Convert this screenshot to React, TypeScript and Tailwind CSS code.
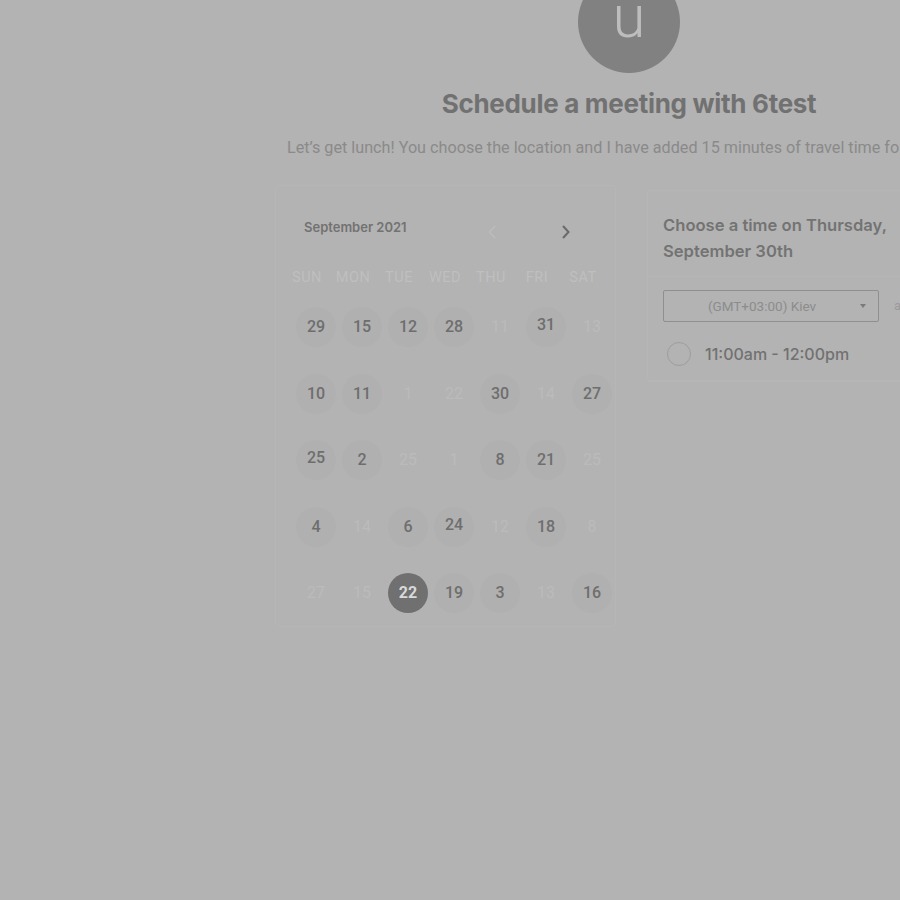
import React from "react";

type Day = { n: number; k: "a" | "f" | "s"; dy?: number };

const rows: Day[][] = [
  [{ n: 29, k: "a" }, { n: 15, k: "a" }, { n: 12, k: "a" }, { n: 28, k: "a" }, { n: 11, k: "f" }, { n: 31, k: "a", dy: -2 }, { n: 13, k: "f" }],
  [{ n: 10, k: "a" }, { n: 11, k: "a" }, { n: 1, k: "f" }, { n: 22, k: "f" }, { n: 30, k: "a" }, { n: 14, k: "f" }, { n: 27, k: "a" }],
  [{ n: 25, k: "a", dy: -2 }, { n: 2, k: "a" }, { n: 25, k: "f" }, { n: 1, k: "f" }, { n: 8, k: "a" }, { n: 21, k: "a" }, { n: 25, k: "f" }],
  [{ n: 4, k: "a" }, { n: 14, k: "f" }, { n: 6, k: "a" }, { n: 24, k: "a", dy: -2 }, { n: 12, k: "f" }, { n: 18, k: "a" }, { n: 8, k: "f" }],
  [{ n: 27, k: "f" }, { n: 15, k: "f" }, { n: 22, k: "s" }, { n: 19, k: "a" }, { n: 3, k: "a" }, { n: 13, k: "f" }, { n: 16, k: "a" }],
];

const week = ["SUN", "MON", "TUE", "WED", "THU", "FRI", "SAT"];

function DayCell({ d }: { d: Day }) {
  const base =
    "w-[40px] h-[40px] rounded-full flex items-center justify-center text-[16px] leading-none";
  if (d.k === "s")
    return (
      <div className={base + " bg-[#707070] text-[#d9d9d9] font-bold"}>{d.n}</div>
    );
  if (d.k === "f")
    return <div className={base + " text-[#bbbbbb] font-normal"}>{d.n}</div>;
  return (
    <div className={base + " bg-[#b0b0b0] text-[#6e6e6e] font-medium"}>
      <span className={d.dy ? "-translate-y-[2px]" : ""}>{d.n}</span>
    </div>
  );
}

export default function App() {
  return (
    <div
      className="w-[900px] h-[900px] overflow-hidden bg-[#b3b3b3]"
      style={{ fontFamily: "Roboto, 'Liberation Sans', sans-serif" }}
    >
      <div className="w-[700px] ml-[279px] flex flex-col items-center">
        <div className="-mt-[29px] w-[102px] h-[102px] rounded-full bg-[#818181] flex items-center justify-center">
          <span className="text-[60px] leading-none text-[#bdbdbd] font-light -mt-[11px]">u</span>
        </div>
        <h1
          className="mt-[15px] text-[26px] leading-[32px] font-bold text-[#717171] tracking-[-0.3px]"
          style={{ fontFamily: "Inter, 'Liberation Sans', sans-serif" }}
        >
          Schedule a meeting with 6test
        </h1>
        <p className="self-start ml-[8px] mt-[17px] text-[16.2px] leading-[22px] text-[#8a8a8a] whitespace-nowrap">
          Let’s get lunch! You choose the location and I have added 15 minutes of travel time for you.
        </p>

        <div className="self-start -ml-[4px] mt-[26px] flex items-start gap-[31px]">
          {/* Calendar card */}
          <div className="w-[341px] h-[442px] border border-[#b6b6b6] rounded-[4px] pt-[33px] pl-[17px]">
            <div className="flex items-center h-[18px]">
              <span
                className="ml-[11px] text-[13px] font-semibold text-[#727272]"
                style={{ fontFamily: "Inter, 'Liberation Sans', sans-serif" }}
              >
                September 2021
              </span>
              <svg className="ml-[81px] mt-[8px]" width="9" height="14" viewBox="0 0 9 14">
                <polyline points="7,1 1.5,7 7,13" fill="none" stroke="#bdbdbd" strokeWidth="1.3" />
              </svg>
              <svg className="ml-[64px] mt-[8px]" width="9" height="14" viewBox="0 0 9 14">
                <polyline points="2,1 7.5,7 2,13" fill="none" stroke="#6a6a6a" strokeWidth="2" />
              </svg>
            </div>
            <div className="ml-[-9px] mt-[31px] grid grid-cols-[repeat(7,46px)] h-[20px]">
              {week.map((w) => (
                <div key={w} className="text-center text-[14.5px] leading-[20px] text-[#bfbfbf] font-normal tracking-[0.5px]">
                  {w}
                </div>
              ))}
            </div>
            <div className="mt-[19px] grid grid-cols-[repeat(7,46px)] auto-rows-[40px] gap-y-[26.5px]">
              {rows.flat().map((d, i) => (
                <div key={i} className="flex justify-center">
                  <DayCell d={d} />
                </div>
              ))}
            </div>
          </div>

          {/* Time card */}
          <div className="mt-[5px] w-[300px] border border-[#b6b6b6] rounded-[4px] pl-[15px] pt-[21px]">
            <div
              className="text-[16.6px] leading-[26px] font-semibold text-[#737373] pb-[12px] border-b border-[#b6b6b6] -ml-[15px] pl-[15px]"
              style={{ fontFamily: "Inter, 'Liberation Sans', sans-serif" }}
            >
              Choose a time on Thursday,
              <br />
              September 30th
            </div>
            <div className="mt-[13px] flex items-center gap-[15px]">
              <div className="w-[216px] h-[32px] border border-[#8f8f8f] rounded-[2px] flex items-center relative">
                <span className="w-full text-center pr-[18px] text-[13.5px] text-[#8c8c8c]">
                  (GMT+03:00) Kiev
                </span>
                <span className="absolute right-[12px] top-[13px] w-0 h-0 border-l-[3.5px] border-r-[3.5px] border-t-[4px] border-l-transparent border-r-transparent border-t-[#7a7a7a]" />
              </div>
              <span className="text-[13px] text-[#9a9a9a]">am/pm</span>
            </div>
            <div className="mt-[20px] pb-[14px] flex items-center border-b border-[#b6b6b6] -ml-[15px] pl-[19px]">
              <div className="w-[24px] h-[24px] rounded-full border border-[#9d9d9d]" />
              <span
                className="ml-[14px] text-[16px] font-medium text-[#717171]"
                style={{ fontFamily: "Inter, 'Liberation Sans', sans-serif" }}
              >
                11:00am - 12:00pm
              </span>
            </div>
          </div>
        </div>
      </div>
    </div>
  );
}
